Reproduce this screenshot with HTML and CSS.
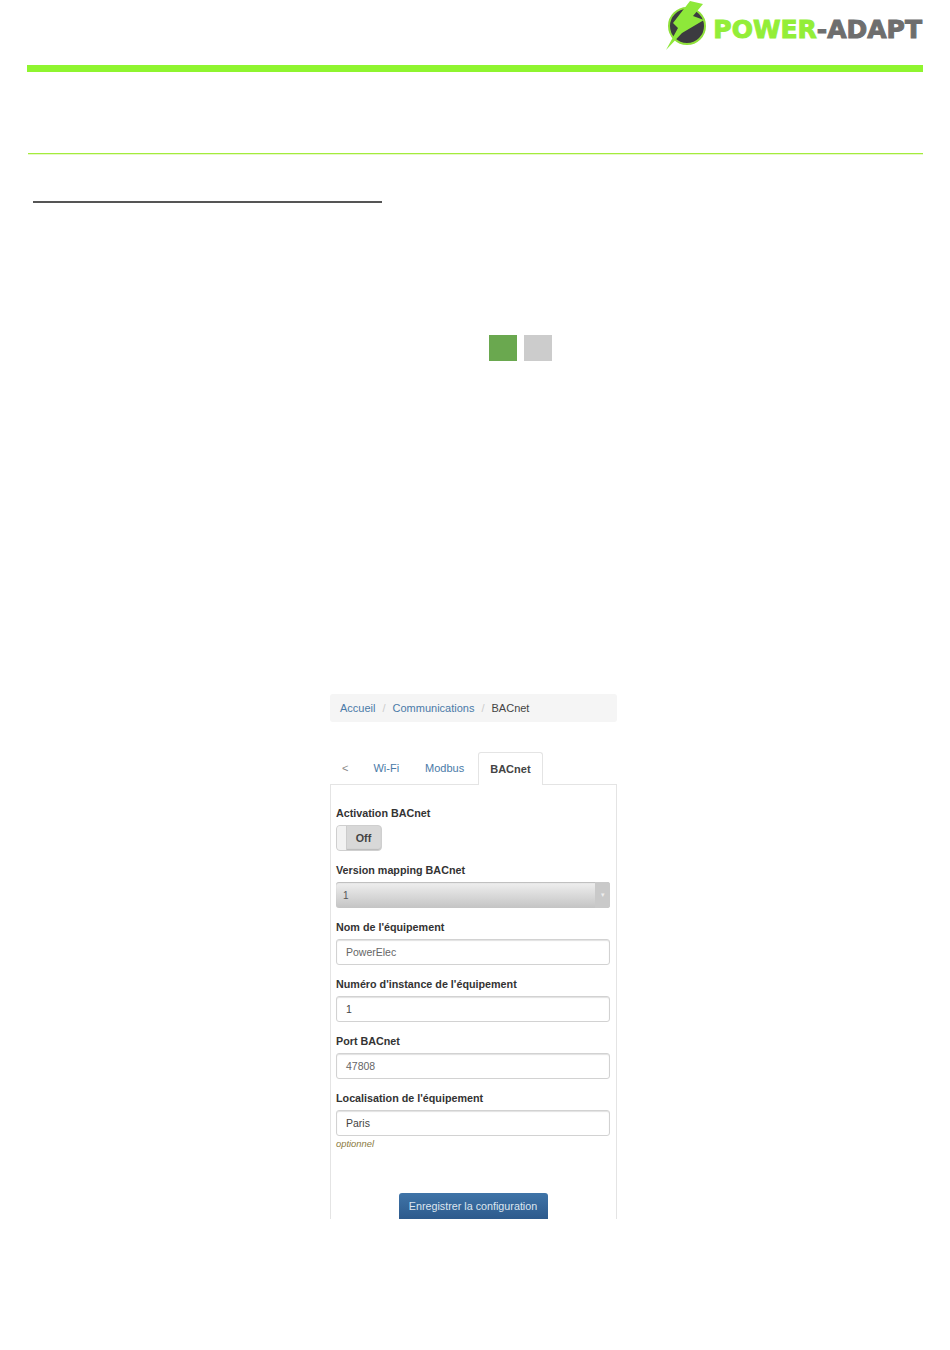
FILE: index.html
```html
<!DOCTYPE html>
<html lang="fr">
<head>
  <meta charset="UTF-8" />
  <meta name="viewport" content="width=device-width, initial-scale=1.0"/>
  <title>Power-Adapt - BACnet</title>
  <link rel="stylesheet" href="styles.css">
</head>
<body>
  <header class="header">
    <div class="logo">
      <svg class="logo-mark" width="48" height="52" viewBox="0 0 48 52">
        <circle cx="21" cy="26" r="18" fill="#3c3b40" stroke="#8fe03a" stroke-width="2"/>
        <path d="M24 1 L37 4 L27 16 L38 20 L16 33 L0 50 L12 28 L7 23 Z" fill="#8ee83a"/>
      </svg>
      <span class="logo-text"><span class="logo-green">POWER</span>-ADAPT</span>
    </div>
  </header>
  <div class="bar"></div>
  <div class="thin-line"></div>
  <div class="title-line"></div>

  <div class="squares">
    <span class="square green"></span>
    <span class="square grey"></span>
  </div>

  <main class="phone">
    <nav class="breadcrumb">
      <a>Accueil</a><span class="sep">/</span><a>Communications</a><span class="sep">/</span><span class="current">BACnet</span>
    </nav>

    <ul class="tabs">
      <li class="tab back">&lt;</li>
      <li class="tab">Wi-Fi</li>
      <li class="tab">Modbus</li>
      <li class="tab active">BACnet</li>
    </ul>

    <form class="panel">
      <label class="first">Activation BACnet</label>
      <div class="switch">
        <span class="knob"></span>
        <span class="switch-label">Off</span>
      </div>

      <label>Version mapping BACnet</label>
      <div class="select">
        <span>1</span>
        <span class="select-arrow">&#9662;</span>
      </div>

      <label>Nom de l'équipement</label>
      <div class="input muted">PowerElec</div>

      <label>Numéro d'instance de l'équipement</label>
      <div class="input">1</div>

      <label>Port BACnet</label>
      <div class="input muted">47808</div>

      <label>Localisation de l'équipement</label>
      <div class="input">Paris</div>
      <p class="hint">optionnel</p>

      <div class="actions">
        <button type="button">Enregistrer la configuration</button>
      </div>
    </form>
  </main>
</body>
</html>
```

FILE: styles.css
```css
body {
  margin: 0;
  background: #fff;
  font-family: "Liberation Sans", Arial, sans-serif;
  color: #333;
}
.header {
  height: 65px;
  padding-right: 28px;
  display: flex;
  justify-content: flex-end;
}
.logo {
  display: flex;
  align-items: flex-start;
}
.logo-text {
  margin: 15px 0 0 -1px;
  font-family: "DejaVu Sans", sans-serif;
  font-weight: bold;
  font-size: 25px;
  line-height: 30px;
  color: #6e6e6e;
  -webkit-text-stroke: 1px currentColor;
  white-space: nowrap;
}
.logo-green {
  color: #93ee38;
}
.bar {
  height: 7px;
  margin: 0 27px;
  background: #8ff52f;
}
.thin-line {
  height: 1px;
  margin: 81px 27px 0 28px;
  background: #a4ec3c;
  box-shadow: 0 1px 0 #e6f9c8;
}
.title-line {
  height: 2px;
  width: 349px;
  margin: 47px 0 0 33px;
  background: #555;
}
.squares {
  display: flex;
  gap: 7px;
  margin: 132px 0 0 489px;
}
.square {
  width: 28px;
  height: 26px;
}
.green {
  background: #6aa84f;
}
.grey {
  background: #cccccc;
}
.phone {
  width: 287px;
  margin: 333px 0 0 330px;
  font-size: 10.75px;
}
.breadcrumb {
  height: 28px;
  padding-left: 10px;
  line-height: 28px;
  background: #f5f5f5;
  border-radius: 3px;
  font-size: 11px;
}
.breadcrumb a {
  color: #4a7aa8;
}
.sep {
  padding: 0 7px;
  color: #ccc;
}
.current {
  color: #444;
}
.tabs {
  display: flex;
  margin: 30px 0 -1px;
  padding: 0;
  list-style: none;
  position: relative;
  z-index: 1;
  font-size: 11px;
}
.tab {
  height: 32px;
  padding: 0 13px;
  line-height: 32px;
  color: #4a7aa8;
}
.back {
  color: #888;
  padding: 0 12px;
}
.active {
  height: 33px;
  margin-left: 1px;
  padding: 0 11px;
  color: #444;
  font-weight: bold;
  background: #fff;
  border: 1px solid #e4e4e4;
  border-bottom: none;
  border-radius: 3px 3px 0 0;
  box-sizing: border-box;
}
.panel {
  height: 435px;
  padding: 0 6px 0 5px;
  box-sizing: border-box;
  border: 1px solid #e4e4e4;
  border-bottom: none;
  overflow: hidden;
}
label {
  display: block;
  margin: 0 0 6px;
  font-weight: bold;
  line-height: 11px;
  color: #333;
}
label.first {
  margin-top: 23px;
}
.switch {
  width: 46px;
  height: 26px;
  display: flex;
  align-items: center;
  box-sizing: border-box;
  background: #d8d8d8;
  border: 1px solid #cfcfcf;
  border-radius: 4px;
  box-shadow: inset 0 -1px 1px #bbb;
  margin-bottom: 14px;
  overflow: hidden;
}
.knob {
  width: 9px;
  height: 24px;
  background: #f2f2f2;
  border-right: 1px solid #ccc;
}
.switch-label {
  flex: 1;
  padding-right: 1px;
  text-align: center;
  font-weight: bold;
  color: #444;
}
.select {
  height: 26px;
  display: flex;
  justify-content: space-between;
  align-items: center;
  padding-left: 7px;
  font-size: 10px;
  color: #555;
  background: linear-gradient(#f0f0f0, #c4c4c4);
  border-radius: 3px;
  box-shadow: inset 0 1px 1px #bbb;
  margin-bottom: 14px;
}
.select-arrow {
  width: 15px;
  height: 26px;
  line-height: 26px;
  text-align: center;
  font-size: 7px;
  color: #eee;
  background: #c9c9c9;
  border-radius: 0 3px 3px 0;
}
.input {
  height: 26px;
  padding-left: 9px;
  line-height: 24px;
  box-sizing: border-box;
  font-size: 10.5px;
  color: #444;
  background: #fff;
  border: 1px solid #d2d2d2;
  border-radius: 3px;
  box-shadow: inset 0 1px 1px rgba(0,0,0,0.12);
  margin-bottom: 14px;
}
.muted {
  color: #666;
}
.hint {
  margin: -13px 0 0;
  font-size: 9.4px;
  font-style: italic;
  line-height: 13px;
  color: #8a7a40;
}
.actions {
  display: flex;
  justify-content: center;
  margin-top: 43px;
}
button {
  width: 149px;
  height: 26px;
  padding: 0;
  font-family: inherit;
  font-size: 10.75px;
  color: #dde6f0;
  background: linear-gradient(#3f74a8, #2d5a8c);
  border: none;
  border-radius: 3px 3px 0 0;
}
```
